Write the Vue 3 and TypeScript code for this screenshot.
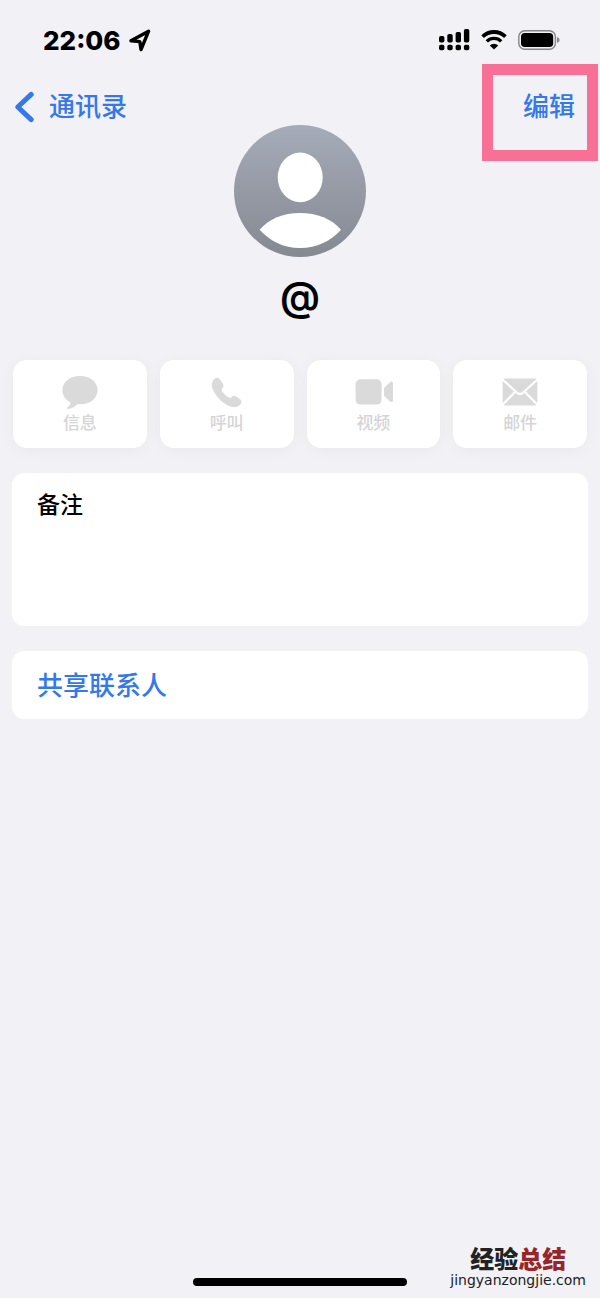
<script setup lang="ts">
import { ref } from 'vue'

type IconName = 'message' | 'call' | 'video' | 'mail'

interface ContactAction {
  icon: IconName
  label: string
}

const actions: ContactAction[] = [
  { icon: 'message', label: '信息' },
  { icon: 'call', label: '呼叫' },
  { icon: 'video', label: '视频' },
  { icon: 'mail', label: '邮件' },
]

const note = ref('')
</script>

<template>
  <div class="screen">
    <div class="status">
      <div class="clock">
        <span>22:06</span>
        <svg width="22" height="24" viewBox="0 0 22 24" aria-hidden="true">
          <path d="M2 11.8 L19.6 2.2 L12 20.6 L10.8 12.6 Z" fill="none" stroke="#000" stroke-width="3.4" stroke-linejoin="round" />
        </svg>
      </div>
      <div class="signals">
        <svg width="31" height="22" viewBox="0 0 31 22" aria-hidden="true">
          <rect x="0" y="7" width="5.4" height="6.5" rx="1.8" />
          <rect x="8.3" y="5" width="5.4" height="8.5" rx="1.8" />
          <rect x="16.6" y="3" width="5.4" height="10.5" rx="1.8" />
          <rect x="24.9" y="0" width="5.4" height="13.5" rx="1.8" />
          <rect x="0" y="15.8" width="5.4" height="5.4" rx="1.8" />
          <rect x="8.3" y="15.8" width="5.4" height="5.4" rx="1.8" />
          <rect x="16.6" y="15.8" width="5.4" height="5.4" rx="1.8" />
          <rect x="24.9" y="15.8" width="5.4" height="5.4" rx="1.8" />
        </svg>
        <svg width="26" height="22" viewBox="0 0 26 22" aria-hidden="true">
          <path d="M1.6 7.6 A16.4 16.4 0 0 1 24.4 7.6" fill="none" stroke="#000" stroke-width="3.8" />
          <path d="M5.8 12.4 A10.2 10.2 0 0 1 20.2 12.4" fill="none" stroke="#000" stroke-width="3.4" />
          <path d="M13 20.6 L8.8 16.4 A6 6 0 0 1 17.2 16.4 Z" />
        </svg>
        <svg width="42" height="22" viewBox="0 0 42 22" aria-hidden="true">
          <rect x="0.8" y="1.8" width="36.6" height="18.4" rx="6" fill="none" stroke="#858589" stroke-width="1.4" />
          <rect x="3" y="4" width="32.2" height="14" rx="3.8" />
          <path d="M39 8 Q41.6 8.8 41.6 11 Q41.6 13.2 39 14 Z" fill="#858589" />
        </svg>
      </div>
    </div>

    <nav class="nav">
      <a class="back" href="#contacts">
        <svg width="20" height="32" viewBox="0 0 20 32" aria-hidden="true">
          <path d="M16.2 3.4 L2.8 16 L16.2 28.6" fill="none" stroke="#3478ea" stroke-width="5" stroke-linecap="round" stroke-linejoin="round" />
        </svg>
        <span>通讯录</span>
      </a>
      <button class="edit" type="button">编辑<span class="highlight"></span></button>
    </nav>

    <main>
      <header class="profile">
        <svg class="avatar" width="132" height="132" viewBox="0 0 132 132" aria-hidden="true">
          <defs>
            <linearGradient id="avatar-fill" x1="0" y1="0" x2="0" y2="1">
              <stop offset="0" stop-color="#a5abb8" />
              <stop offset="1" stop-color="#858992" />
            </linearGradient>
          </defs>
          <circle cx="66" cy="66" r="66" fill="url(#avatar-fill)" />
          <ellipse cx="66.2" cy="52.4" rx="22.5" ry="24.8" fill="#fff" />
          <path d="M25.6 104.8 C35 94 49 88 66 88 C83 88 98 94 107 104.8 C97 116 83 123 66 123 C49 123 36 116 25.6 104.8 Z" fill="#fff" />
        </svg>
        <h1>@</h1>
      </header>

      <div class="actions">
        <button v-for="action in actions" :key="action.icon" class="action" type="button" disabled>
          <svg v-if="action.icon === 'message'" width="40" height="34" viewBox="0 0 40 34" aria-hidden="true">
            <path d="M20 1 C10 1 2.4 7 2.4 15 C2.4 20.6 5.6 25 10.6 27.4 C10.4 29.8 8.8 31 7.4 32.4 C6.4 33.6 7.6 34.2 9 33.8 C12.4 33.2 15 31.4 17.6 29.2 C29.6 30.2 37.6 23.6 37.6 15 C37.6 7 30 1 20 1 Z" />
          </svg>
          <svg v-else-if="action.icon === 'call'" width="40" height="34" viewBox="0 0 40 34" aria-hidden="true">
            <path d="M6.8 4.6 C8.8 2.2 11.4 2.2 13 4.6 L16 9 C17 10.6 16.6 12 15.4 13.2 C14.4 14.2 14.4 15 15 16 C16.8 18.8 19 21 21.8 22.6 C22.8 23.2 23.6 23 24.6 22 C26 20.6 27.4 20.4 29 21.4 L32.8 24 C35 25.6 35 28 33 30 C29.6 33.2 24.8 32.6 20 30 C15.6 27.6 11.6 23.8 8.4 19.2 C4.8 13.8 3.2 8.6 6.8 4.6 Z" />
          </svg>
          <svg v-else-if="action.icon === 'video'" width="40" height="34" viewBox="0 0 40 34" aria-hidden="true">
            <rect x="2.6" y="4.2" width="26" height="25.4" rx="5" />
            <path d="M31 13 L36.8 7.4 C38.6 6 40 6.4 40 8.6 V25.2 C40 27.2 38.6 27.6 36.8 26.2 L31 20.8 Z" />
          </svg>
          <svg v-else width="40" height="34" viewBox="0 0 40 34" aria-hidden="true">
            <rect x="2.6" y="3.6" width="34.8" height="27" rx="2" />
            <path d="M2 4 L17.6 18.2 Q20 20.2 22.4 18.2 L38 4 M2 30.2 L15 17 M38 30.2 L25 17" fill="none" stroke="#fff" stroke-width="2.2" />
          </svg>
          <span>{{ action.label }}</span>
        </button>
      </div>

      <section class="card notes">
        <label for="note">备注</label>
        <textarea id="note" v-model="note" rows="3"></textarea>
      </section>

      <button class="card share" type="button">共享联系人</button>
    </main>

    <footer class="bottom">
      <div class="home"></div>
      <div class="watermark">
        <div class="brand">经验<span>总结</span></div>
        <div class="site">jingyanzongjie.com</div>
      </div>
    </footer>
  </div>
</template>

<style>
body {
  margin: 0;
  background: #f1f1f6;
}
</style>

<style scoped>
.screen {
  box-sizing: border-box;
  display: flex;
  flex-direction: column;
  min-height: 100vh;
  background: #f1f1f6;
  color: #000;
  font-family: Inter, "Noto Sans CJK SC", sans-serif;
}

button,
textarea {
  margin: 0;
  padding: 0;
  border: 0;
  background: none;
  font: inherit;
}

svg {
  display: block;
  flex: none;
}

.status {
  display: flex;
  justify-content: space-between;
  align-items: center;
  height: 80px;
  padding: 0 40px 0 43px;
}

.clock {
  display: flex;
  align-items: center;
  gap: 8px;
  padding-top: 2px;
  font-size: 26px;
  font-weight: 800;
  line-height: 32px;
}

.signals {
  display: flex;
  align-items: center;
  gap: 11px;
}

.nav {
  display: flex;
  justify-content: space-between;
  align-items: center;
  height: 45px;
  padding: 9px 25px 0 15px;
  box-sizing: border-box;
  color: #3478ea;
  font-size: 26px;
  font-weight: 500;
  line-height: 40px;
}

.back {
  display: flex;
  align-items: center;
  gap: 14px;
  color: inherit;
  text-decoration: none;
}

.edit {
  position: relative;
  color: inherit;
}

.highlight {
  position: absolute;
  inset: -23px -23px -34px -41px;
  border: 11px solid #f87095;
}

main {
  display: flex;
  flex-direction: column;
  padding: 0 12px;
}

.profile {
  display: flex;
  flex-direction: column;
  align-items: center;
}

h1 {
  margin: 16px 0 39px;
  font-size: 40px;
  font-weight: 600;
  line-height: 48px;
}

.actions {
  display: grid;
  grid-template-columns: repeat(4, 1fr);
  gap: 13px;
  padding: 0 1px;
}

.action {
  display: flex;
  flex-direction: column;
  align-items: center;
  height: 88px;
  padding-top: 15px;
  box-sizing: border-box;
  border-radius: 14px;
  background: #fff;
  box-shadow: 0 2px 16px rgba(0, 0, 30, 0.04);
  color: #d5d5d5;
  font-size: 17px;
  font-weight: 500;
  line-height: 28px;
}

.action svg {
  fill: #dadada;
}

.card {
  border-radius: 12px;
  background: #fff;
}

.notes {
  display: flex;
  flex-direction: column;
  margin-top: 25px;
  padding: 16px 25px;
  font-size: 23px;
  font-weight: 500;
  line-height: 32px;
}

textarea {
  height: 89px;
  outline: 0;
  resize: none;
}

.share {
  margin-top: 25px;
  padding: 15px 25px 13px;
  color: #3478ea;
  font-size: 26px;
  font-weight: 500;
  line-height: 40px;
  text-align: left;
}

.bottom {
  position: relative;
  display: flex;
  justify-content: center;
  margin-top: auto;
  padding-bottom: 12px;
}

.home {
  width: 214px;
  height: 8px;
  border-radius: 4px;
  background: #000;
}

.watermark {
  position: absolute;
  right: 14px;
  bottom: 10px;
  color: #222;
  text-align: center;
}

.brand {
  font-size: 24px;
  font-weight: 900;
  line-height: 24px;
}

.brand span {
  color: #962629;
}

.site {
  font-family: "DejaVu Sans", sans-serif;
  font-size: 14px;
  font-weight: 400;
  line-height: 16px;
}
</style>
